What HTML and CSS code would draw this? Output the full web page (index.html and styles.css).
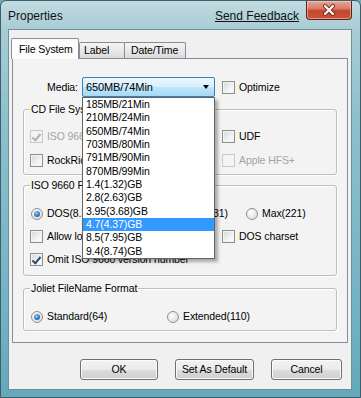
FILE: index.html
```html
<!DOCTYPE html>
<html lang="en">
<head>
<meta charset="UTF-8">
<meta name="viewport" content="width=device-width, initial-scale=1.0">
<title>Properties</title>
<link rel="stylesheet" href="styles.css">
</head>
<body>

<div class="window">
    <!-- Barra de título -->
    <div class="titlebar">
        <span class="title">Properties</span>
        <a href="#" class="feedback">Send Feedback</a>
        <span class="btn-close">
            <svg width="14" height="12" viewBox="0 0 14 12">
                <path d="M3 2 L11 10 M11 2 L3 10" stroke="#7a2a1e" stroke-width="4" stroke-linecap="round"/>
                <path d="M3 2 L11 10 M11 2 L3 10" stroke="#fff" stroke-width="2.2" stroke-linecap="round"/>
            </svg>
        </span>
    </div>

    <div class="client">
        <div class="tabs">
            <span class="tab tab-active">File System</span>
            <span class="tab tab-label">Label</span>
            <span class="tab tab-date">Date/Time</span>
        </div>

        <div class="panel">
            <div class="media-row">
                <span class="media-label">Media:</span>
                <div class="combo">
                    <span class="combo-value">650MB/74Min</span>
                    <span class="combo-arrow"></span>
                    <ul class="dropdown">
                        <li>185MB/21Min</li>
                        <li>210MB/24Min</li>
                        <li>650MB/74Min</li>
                        <li>703MB/80Min</li>
                        <li>791MB/90Min</li>
                        <li>870MB/99Min</li>
                        <li>1.4(1.32)GB</li>
                        <li>2.8(2.63)GB</li>
                        <li>3.95(3.68)GB</li>
                        <li class="selected">4.7(4.37)GB</li>
                        <li>8.5(7.95)GB</li>
                        <li>9.4(8.74)GB</li>
                    </ul>
                </div>
                <label class="opt opt-optimize"><span class="check"></span>Optimize</label>
            </div>

            <fieldset class="group group-cd">
                <legend>CD File System</legend>
                <div class="row">
                    <label class="opt disabled"><span class="check checked"></span>ISO 9660</label>
                    <label class="opt"><span class="check"></span>UDF</label>
                </div>
                <div class="row">
                    <label class="opt"><span class="check"></span>RockRidge</label>
                    <label class="opt disabled"><span class="check"></span>Apple HFS+</label>
                </div>
            </fieldset>

            <fieldset class="group group-iso">
                <legend>ISO 9660 FileName Format</legend>
                <div class="row row-radio">
                    <label class="opt"><span class="radio on"></span>DOS(8.3)</label>
                    <label class="opt opt-mid"><span class="radio"></span>Level2(31)</label>
                    <label class="opt"><span class="radio"></span>Max(221)</label>
                </div>
                <div class="row">
                    <label class="opt"><span class="check"></span>Allow lowercase</label>
                    <label class="opt"><span class="check"></span>DOS charset</label>
                </div>
                <div class="row">
                    <label class="opt"><span class="check checked"></span>Omit ISO 9660 version number</label>
                </div>
            </fieldset>

            <fieldset class="group group-joliet">
                <legend>Joliet FileName Format</legend>
                <div class="row row-joliet">
                    <label class="opt"><span class="radio on"></span>Standard(64)</label>
                    <label class="opt"><span class="radio"></span>Extended(110)</label>
                </div>
            </fieldset>
        </div>

        <div class="buttons">
            <button class="btn btn-ok">OK</button>
            <button class="btn btn-default">Set As Default</button>
            <button class="btn btn-cancel">Cancel</button>
        </div>
    </div>
</div>

</body>
</html>
```

FILE: styles.css
```css
* {
    box-sizing: border-box;
}

body {
    margin: 0;
    font-family: "Liberation Sans", Arial, sans-serif;
    font-size: 10.5px;
    letter-spacing: -0.1px;
    line-height: 13px;
    color: #000;
    background: #6aaabb;
}

/* Moldura da janela */
.window {
    width: 361px;
    height: 398px;
    display: flex;
    flex-direction: column;
    padding: 0 8px 7px 7px;
    border: 1px solid #3d5f69;
    border-radius: 6px 6px 0 0;
    background: linear-gradient(180deg, #c2dbe1 0px, #a9ccd5 28px, #8cc0cd 120px, #74b3c4 300px, #63a8bb 398px);
}

.titlebar {
    height: 28px;
    display: flex;
    align-items: flex-start;
    margin-left: -1px;
}

.title {
    font-size: 12px;
    letter-spacing: 0;
    margin: 8px 0 0 1px;
    line-height: 14px;
    color: #111;
}

.feedback {
    font-size: 12px;
    letter-spacing: 0;
    margin: 8px 7px 0 auto;
    line-height: 14px;
    color: #111;
    text-decoration: underline;
}

.btn-close {
    width: 46px;
    height: 19px;
    display: flex;
    align-items: center;
    justify-content: center;
    border: 1px solid #5b2118;
    border-top: none;
    border-radius: 0 0 4px 4px;
    background: linear-gradient(180deg, #e5a596 0%, #d9806c 40%, #c7442c 55%, #c9563f 100%);
    box-shadow: inset 0 0 0 1px rgba(255, 220, 210, 0.5);
}

/* Área cliente */
.client {
    flex: 1;
    background: #f0f0f0;
    padding: 8px 3px 0 3px;
    border: 1px solid #6e8f98;
}

.tabs {
    display: flex;
    align-items: flex-end;
    height: 20px;
    margin-left: -1px;
    position: relative;
    z-index: 1;
}

.tab {
    height: 16px;
    border: 1px solid #898c95;
    border-bottom: none;
    border-radius: 2px 2px 0 0;
    background: linear-gradient(180deg, #f4f4f4 0%, #e9e9e9 50%, #dadada 100%);
    line-height: 15px;
}

.tab-active {
    width: 68px;
    height: 21px;
    margin-bottom: -1px;
    padding-left: 7px;
    line-height: 20px;
    background: #fcfcfc;
}

.tab-label {
    width: 46px;
    padding-left: 4px;
}

.tab-date {
    width: 62px;
    margin-left: -1px;
    padding-left: 6px;
}

.panel {
    height: 285px;
    border: 1px solid #898c95;
    background: #f3f3f3;
    padding: 0 10px;
}

/* Linha da mídia */
.media-row {
    display: flex;
    align-items: center;
    height: 20px;
    margin-top: 18px;
}

.media-label {
    margin-left: 24px;
    width: 35px;
}

.combo {
    position: relative;
    width: 133px;
    height: 20px;
    border: 1px solid #3c7fb1;
    border-radius: 2px;
    background: linear-gradient(180deg, #eaf6fd 0%, #d9f0fc 50%, #bee6fd 50%, #a7d9f5 100%);
    display: flex;
    align-items: center;
    padding-left: 3px;
    font-size: 11px;
}

.combo-value {
    flex: 1;
}

.combo-arrow {
    width: 0;
    height: 0;
    margin-right: 5px;
    border-left: 3.5px solid transparent;
    border-right: 3.5px solid transparent;
    border-top: 4px solid #000;
}

.dropdown {
    position: absolute;
    top: 19px;
    left: -1px;
    width: 133px;
    margin: 0;
    padding: 0;
    list-style: none;
    font-size: 10.5px;
    background: #fff;
    border: 1px solid #646464;
    box-shadow: 3px 3px 3px rgba(0, 0, 0, 0.3);
    z-index: 5;
}

.dropdown li {
    height: 13.33px;
    line-height: 13.33px;
    padding-left: 3px;
}

.dropdown li.selected {
    background: #3399ff;
    color: #fff;
}

/* Opções */
.opt {
    display: flex;
    align-items: center;
    white-space: nowrap;
}

.opt-optimize {
    margin-left: 7px;
}

.disabled {
    color: #a3a3a3;
}

.check {
    width: 13px;
    height: 13px;
    margin-right: 4px;
    border: 1px solid #8e8f8f;
    background: linear-gradient(135deg, #d6d6d6 0%, #f2f2f2 60%, #fff 100%);
    box-shadow: inset 0 0 0 1px #f4f4f4;
    position: relative;
}

.check.checked::after {
    content: "";
    position: absolute;
    left: 3px;
    top: 1px;
    width: 3px;
    height: 7px;
    border-right: 2px solid #2a4b73;
    border-bottom: 2px solid #2a4b73;
    transform: rotate(40deg);
}

.disabled .check {
    border-color: #c8c8c8;
    background: #f4f4f4;
}

.disabled .check.checked::after {
    border-color: #b0b0b0;
}

.radio {
    width: 12px;
    height: 12px;
    margin: 0 4px 0 1px;
    border: 1px solid #8e8f8f;
    border-radius: 50%;
    background: radial-gradient(circle at 35% 35%, #fff 0%, #e6e6e6 60%, #cfcfcf 100%);
    position: relative;
}

.radio.on::after {
    content: "";
    position: absolute;
    left: 2px;
    top: 2px;
    width: 6px;
    height: 6px;
    border-radius: 50%;
    background: radial-gradient(circle at 40% 35%, #9fd3f5 0%, #2d78c2 55%, #1b4f8f 100%);
}

/* Grupos */
.group {
    margin: 0;
    padding: 0 6px;
    min-width: 0;
    border: 1px solid #bdbdbd;
    border-radius: 3px;
    box-shadow: inset 1px 1px 0 #fff, 1px 1px 0 #fff;
}

.group legend {
    padding: 0 1px;
    line-height: 13px;
}

.row {
    display: grid;
    grid-template-columns: 192px auto;
    align-items: center;
    height: 24px;
}

.group-cd {
    margin-top: 6px;
    padding-top: 8px;
    padding-bottom: 2px;
}

.group-iso {
    margin-top: 4px;
    padding-top: 10px;
    padding-bottom: 4px;
}

.group-iso .row {
    height: 23px;
}

.row-radio {
    grid-template-columns: 96px 119px auto;
}

.opt-mid {
    justify-self: end;
    margin-right: 17px;
}

.group-joliet {
    margin-top: 6px;
    padding-top: 10px;
    padding-bottom: 2px;
}

.row-joliet {
    height: 23px;
    grid-template-columns: 136px auto;
}

/* Botões */
.buttons {
    display: flex;
    justify-content: flex-end;
    gap: 17px;
    margin: 16px 6px 0 0;
}

.btn {
    height: 21px;
    padding: 0;
    font: inherit;
    letter-spacing: inherit;
    color: #000;
    border: 1px solid #707070;
    border-radius: 3px;
    background: linear-gradient(180deg, #f2f2f2 0%, #ebebeb 50%, #dddddd 50%, #cfcfcf 100%);
    box-shadow: inset 0 0 0 1px #fbfbfb;
}

.btn-ok {
    width: 78px;
}

.btn-default {
    width: 79px;
}

.btn-cancel {
    width: 71px;
}
```
